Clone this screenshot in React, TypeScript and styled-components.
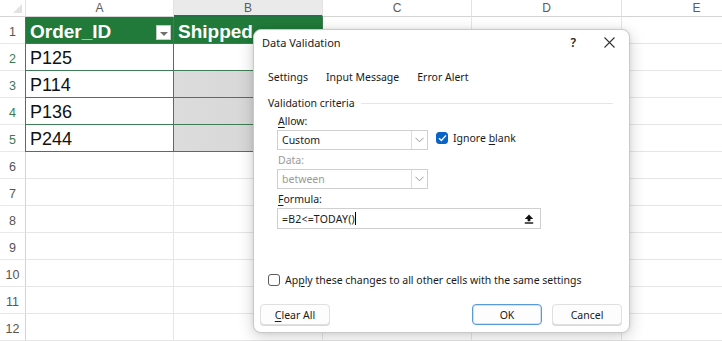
import React from 'react';
import styled, { createGlobalStyle } from 'styled-components';

const GlobalStyle = createGlobalStyle`
  html, body {
    margin: 0;
    padding: 0;
    background: #ffffff;
    overflow: hidden;
  }
  * {
    box-sizing: border-box;
  }
`;

const COLS = [
  { key: 'A', width: 148 },
  { key: 'B', width: 149 },
  { key: 'C', width: 149 },
  { key: 'D', width: 150 },
  { key: 'E', width: 150 },
];

const ROWS = [1, 2, 3, 4, 5, 6, 7, 8, 9, 10, 11, 12];

const DATA: Record<number, string> = { 2: 'P125', 3: 'P114', 4: 'P136', 5: 'P244' };
const HEADERS: Record<string, string> = { A: 'Order_ID', B: 'Shipped' };

const Page = styled.div`
  position: relative;
  width: 722px;
  height: 341px;
  overflow: hidden;
  font-family: 'Liberation Sans', Arial, sans-serif;
`;

const Sheet = styled.div`
  display: grid;
  grid-template-columns: 26px ${COLS.map((c) => `${c.width}px`).join(' ')};
  grid-template-rows: 17px repeat(12, 27px);
`;

const Corner = styled.div`
  position: relative;
  border-right: 1px solid #e3e3e3;
  border-bottom: 1px solid #d4d4d4;
  &::after {
    content: '';
    position: absolute;
    right: 3px;
    bottom: 3px;
    border-left: 9px solid transparent;
    border-bottom: 9px solid #e2e2e2;
  }
`;

const ColHead = styled.div<{ $active?: boolean }>`
  display: flex;
  align-items: center;
  justify-content: center;
  font-family: 'Liberation Sans', Arial, sans-serif;
  font-size: 12px;
  color: #5c5c5c;
  background: ${(p) => (p.$active ? '#eaeaea' : '#ffffff')};
  border-right: 1px solid #e3e3e3;
  border-bottom: ${(p) => (p.$active ? '2px solid #217346' : '1px solid #d4d4d4')};
`;

const RowHead = styled.div<{ $active?: boolean }>`
  display: flex;
  align-items: center;
  justify-content: center;
  padding-top: 3px;
  font-size: 12.5px;
  color: ${(p) => (p.$active ? '#3a7a52' : '#555555')};
  border-right: 1px solid #d4d4d4;
  border-bottom: 1px solid #e8e8e8;
`;

const Cell = styled.div<{ $header?: boolean; $table?: boolean; $shade?: boolean; $left?: boolean }>`
  position: relative;
  display: flex;
  align-items: center;
  padding: 3px 0 0 4px;
  font-family: 'Liberation Sans', Arial, sans-serif;
  font-size: ${(p) => (p.$header ? '19px' : '18px')};
  white-space: nowrap;
  overflow: hidden;
  color: ${(p) => (p.$header ? '#ffffff' : '#111111')};
  font-weight: ${(p) => (p.$header ? 700 : 400)};
  background: ${(p) =>
    p.$header ? '#217a3a' : p.$shade ? 'linear-gradient(90deg, #dcdcdc 0%, #d4d4d4 100%)' : '#ffffff'};
  border-right: 1px solid ${(p) => (p.$table ? '#3f7d55' : '#e6e6e6')};
  border-bottom: 1px solid ${(p) => (p.$table ? '#3f7d55' : '#e6e6e6')};
  border-left: ${(p) => (p.$left ? '1px solid #3f7d55' : '0')};
  ${(p) => (p.$left ? 'margin-left: -1px;' : '')}
`;

const FilterBtn = styled.span`
  position: absolute;
  right: 2px;
  top: 8px;
  width: 15px;
  height: 15px;
  background: #ffffff;
  border: 1px solid #c8c8c8;
  display: flex;
  align-items: center;
  justify-content: center;
  &::after {
    content: '';
    border-left: 4px solid transparent;
    border-right: 4px solid transparent;
    border-top: 4px solid #707070;
    margin-top: 2px;
  }
`;

const Dialog = styled.div`
  position: absolute;
  left: 253px;
  top: 29px;
  width: 377px;
  height: 304px;
  background: #ffffff;
  border: 1px solid #c9c9c9;
  border-radius: 8px;
  box-shadow: 0 4px 16px rgba(0, 0, 0, 0.18), 0 0 4px rgba(0, 0, 0, 0.08);
  font-family: 'Noto Sans', 'Open Sans', sans-serif;
  font-size: 10.5px;
  color: #1a1a1a;
  display: flex;
  flex-direction: column;
`;

const TitleBar = styled.div`
  height: 28px;
  display: flex;
  align-items: center;
  padding: 0 14px 3px 8px;
`;

const Title = styled.div`
  flex: 1;
  font-size: 11px;
`;

const TitleBtn = styled.span`
  display: flex;
  align-items: center;
  justify-content: center;
  color: #222;
  font-size: 12px;
  font-weight: 600;
  margin-left: 28px;
`;

const Tabs = styled.div`
  display: flex;
  gap: 18px;
  padding: 8px 0 0 14px;
  height: 30px;
  align-items: center;
`;

const Tab = styled.span``;

const Body = styled.div`
  padding: 0 16px 0 14px;
  display: flex;
  flex-direction: column;
`;

const GroupTitle = styled.div`
  display: flex;
  align-items: center;
  gap: 6px;
  height: 18px;
  margin-top: 6px;
  &::after {
    content: '';
    flex: 1;
    height: 1px;
    background: #e6e6e6;
  }
`;

const Fields = styled.div`
  display: flex;
  flex-direction: column;
  padding-left: 9px;
`;

const Label = styled.div<{ $disabled?: boolean; $h?: number }>`
  height: ${(p) => p.$h ?? 19}px;
  display: flex;
  align-items: center;
  padding-left: 1px;
  color: ${(p) => (p.$disabled ? '#9a9a9a' : '#1a1a1a')};
  u {
    text-underline-offset: 2px;
  }
`;

const Row = styled.div`
  display: flex;
  align-items: flex-start;
`;

const Select = styled.div<{ $disabled?: boolean }>`
  width: 151px;
  height: 20px;
  border: 1px solid #cfcfcf;
  display: flex;
  align-items: center;
  color: ${(p) => (p.$disabled ? '#9a9a9a' : '#1a1a1a')};
  background: #ffffff;
`;

const SelectText = styled.span`
  flex: 1;
  padding-left: 4px;
`;

const SelectArrow = styled.span`
  width: 16px;
  height: 100%;
  border-left: 1px solid #dcdcdc;
  display: flex;
  align-items: center;
  justify-content: center;
`;

const CheckLabel = styled.label`
  display: flex;
  align-items: center;
  gap: 5px;
  margin-left: 8px;
  margin-top: 1px;
  u {
    text-underline-offset: 2px;
  }
`;

const Box = styled.span<{ $checked?: boolean }>`
  width: 12px;
  height: 12px;
  border-radius: 3px;
  display: flex;
  align-items: center;
  justify-content: center;
  background: ${(p) => (p.$checked ? '#0a64c8' : '#ffffff')};
  border: 1px solid ${(p) => (p.$checked ? '#0a64c8' : '#5a5a5a')};
`;

const FormulaBox = styled.div`
  width: 264px;
  height: 21px;
  border: 1px solid #cfcfcf;
  display: flex;
  align-items: center;
  padding: 0 6px 0 4px;
`;

const FormulaText = styled.span`
  flex: 1;
  letter-spacing: 0.2px;
  &::after {
    content: '';
    display: inline-block;
    width: 1px;
    height: 13px;
    background: #000;
    vertical-align: -2px;
  }
`;

const ApplyRow = styled.label`
  display: flex;
  align-items: center;
  gap: 5px;
  margin-top: 44px;
  u {
    text-underline-offset: 2px;
  }
`;

const Footer = styled.div`
  display: flex;
  align-items: center;
  gap: 10px;
  padding: 0 7px 0 6px;
  margin-top: 17px;
`;

const FooterGap = styled.div`
  flex: 1;
`;

const Button = styled.div<{ $primary?: boolean }>`
  width: 70px;
  height: 21px;
  border-radius: 4px;
  display: flex;
  align-items: center;
  justify-content: center;
  background: #fdfdfd;
  border: 1px solid ${(p) => (p.$primary ? '#5b9bd5' : '#e0e0e0')};
  box-shadow: ${(p) => (p.$primary ? 'inset 0 0 0 1px #cfe2f5' : '0 1px 0 #d8d8d8')};
  u {
    text-underline-offset: 2px;
  }
`;

const Chevron = () => (
  <svg width="9" height="6" viewBox="0 0 9 6">
    <path d="M0.5 0.8 L4.5 4.8 L8.5 0.8" fill="none" stroke="#8a8a8a" strokeWidth="0.9" />
  </svg>
);

const Check = () => (
  <svg width="9" height="8" viewBox="0 0 9 8">
    <path d="M1 4.2 L3.4 6.4 L8 1.4" fill="none" stroke="#ffffff" strokeWidth="1.4" />
  </svg>
);

const CloseIcon = () => (
  <svg width="11" height="11" viewBox="0 0 11 11">
    <path d="M0.5 0.5 L10.5 10.5 M10.5 0.5 L0.5 10.5" stroke="#333" strokeWidth="1.1" />
  </svg>
);

const CollapseIcon = () => (
  <svg width="10" height="10" viewBox="0 0 10 10">
    <path d="M5 0.5 L9.2 5 L6.4 5 L6.4 7.2 L3.6 7.2 L3.6 5 L0.8 5 Z" fill="#111" />
    <rect x="0.8" y="8.3" width="8.4" height="1.4" fill="#111" />
  </svg>
);

export default function App() {
  return (
    <Page>
      <GlobalStyle />
      <Sheet>
        <Corner />
        {COLS.map((c) => (
          <ColHead key={c.key} $active={c.key === 'B'}>
            {c.key}
          </ColHead>
        ))}
        {ROWS.map((r) => (
          <React.Fragment key={r}>
            <RowHead $active={r >= 2 && r <= 5}>{r}</RowHead>
            {COLS.map((c) => {
              const inTable = r <= 5 && (c.key === 'A' || c.key === 'B');
              const header = r === 1 && inTable;
              let text = '';
              if (header) text = HEADERS[c.key];
              if (c.key === 'A' && DATA[r]) text = DATA[r];
              return (
                <Cell
                  key={c.key}
                  $header={header}
                  $table={inTable}
                  $left={c.key === 'A' && inTable}
                  $shade={c.key === 'B' && r >= 3 && r <= 5}
                >
                  {text}
                  {header && c.key === 'A' && <FilterBtn />}
                </Cell>
              );
            })}
          </React.Fragment>
        ))}
      </Sheet>

      <Dialog>
        <TitleBar>
          <Title>Data Validation</Title>
          <TitleBtn>?</TitleBtn>
          <TitleBtn>
            <CloseIcon />
          </TitleBtn>
        </TitleBar>
        <Tabs>
          <Tab>Settings</Tab>
          <Tab>Input Message</Tab>
          <Tab>Error Alert</Tab>
        </Tabs>
        <Body>
          <GroupTitle>Validation criteria</GroupTitle>
          <Fields>
            <Label $h={18}>
              <span>
                <u>A</u>llow:
              </span>
            </Label>
            <Row>
              <Select>
                <SelectText>Custom</SelectText>
                <SelectArrow>
                  <Chevron />
                </SelectArrow>
              </Select>
              <CheckLabel>
                <Box $checked>
                  <Check />
                </Box>
                <span>
                  Ignore <u>b</u>lank
                </span>
              </CheckLabel>
            </Row>
            <Label $disabled>Data:</Label>
            <Select $disabled>
              <SelectText>between</SelectText>
              <SelectArrow>
                <Chevron />
              </SelectArrow>
            </Select>
            <Label>
              <span>
                <u>F</u>ormula:
              </span>
            </Label>
            <FormulaBox>
              <FormulaText>=B2&lt;=TODAY()</FormulaText>
              <CollapseIcon />
            </FormulaBox>
          </Fields>
          <ApplyRow>
            <Box />
            <span>
              Ap<u>p</u>ly these changes to all other cells with the same settings
            </span>
          </ApplyRow>
        </Body>
        <Footer>
          <Button>
            <span>
              <u>C</u>lear All
            </span>
          </Button>
          <FooterGap />
          <Button $primary>OK</Button>
          <Button>Cancel</Button>
        </Footer>
      </Dialog>
    </Page>
  );
}
